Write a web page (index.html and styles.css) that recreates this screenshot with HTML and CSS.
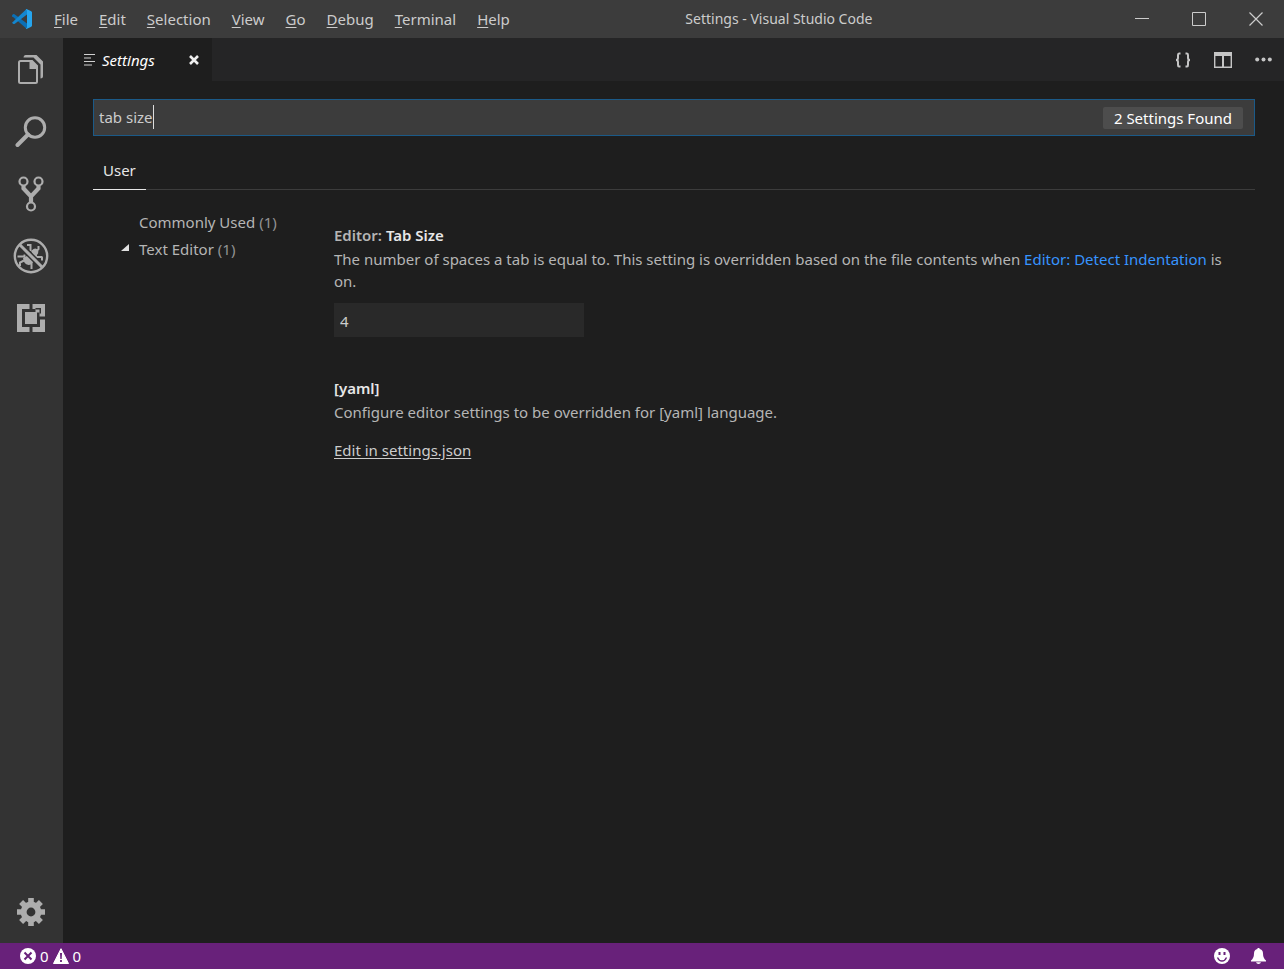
FILE: index.html
```html
<!DOCTYPE html>
<html lang="en">
<head>
<meta charset="utf-8">
<title>Settings - Visual Studio Code</title>
<link rel="stylesheet" href="styles.css">
</head>
<body>
<div class="window">
  <header class="titlebar">
    <svg class="logo" width="20" height="20" viewBox="0 0 20 20" aria-hidden="true">
      <path fill="#0b6fb5" d="M0 6.200 1.300 5.100 2.500 5.200 15 14.600V19.500L14 19.200.2 7.300Z"/>
      <path fill="#1486cf" d="M0 13.700 14 .6 15 .2V5.400L2.500 14.900 1.300 15Z"/>
      <path fill="#26a5ee" d="M14.500 0 19.300 2.200 20 3.200V16.800L19.300 17.800 14.500 20 13.800 19.400 15 18.500V1.500L13.800.6Z"/>
    </svg>
    <nav class="menu" aria-label="Main menu">
      <button type="button"><u>F</u>ile</button>
      <button type="button"><u>E</u>dit</button>
      <button type="button"><u>S</u>election</button>
      <button type="button"><u>V</u>iew</button>
      <button type="button"><u>G</u>o</button>
      <button type="button"><u>D</u>ebug</button>
      <button type="button"><u>T</u>erminal</button>
      <button type="button"><u>H</u>elp</button>
    </nav>
    <div class="title">Settings - Visual Studio Code</div>
    <div class="window-controls">
      <button type="button" aria-label="Minimize"><svg width="14" height="14" viewBox="0 0 14 14"><path d="M0 6.500H14" stroke="#ccc" fill="none"/></svg></button>
      <button type="button" aria-label="Maximize"><svg width="14" height="14" viewBox="0 0 14 14"><path d="M.5.5H13.500V13.500H.5Z" stroke="#ccc" fill="none"/></svg></button>
      <button type="button" aria-label="Close"><svg width="14" height="14" viewBox="0 0 14 14"><path d="M.5.500 13.500 13.500M13.500.5.500 13.500" stroke="#ccc" stroke-width="1.200" fill="none"/></svg></button>
    </div>
  </header>

  <div class="workbench">
    <aside class="activitybar">
      <button type="button" aria-label="Explorer">
        <svg width="26" height="30" viewBox="0 0 26 30"><path fill="none" stroke="#adadad" stroke-width="2" stroke-linejoin="round" d="M12.500 6H2.500Q1 6 1 7.500V26.500Q1 28 2.500 28H17.500Q19 28 19 26.500V12"/><path fill="#adadad" d="M11.500 5H14.500L20 10.500V14H11.500ZM5.500 2.500Q5.500 0 7.500 0H18.500L25 6.500V21.500Q25 23.500 22.500 23.500V9.500L15.500 2.500Z"/></svg>
      </button>
      <button type="button" aria-label="Search">
        <svg width="32" height="32" viewBox="0 0 32 32"><circle cx="20" cy="11.500" r="9.700" fill="none" stroke="#adadad" stroke-width="3"/><path d="M13 18.500 2.500 29" stroke="#adadad" stroke-width="4" stroke-linecap="round"/></svg>
      </button>
      <button type="button" aria-label="Source Control">
        <svg width="26" height="36" viewBox="0 0 26 36"><g fill="none" stroke="#adadad"><g stroke-width="2.200"><circle cx="5.500" cy="5.500" r="4"/><circle cx="20.500" cy="5.500" r="4"/><circle cx="13" cy="30.500" r="4"/></g><path stroke-width="4.200" d="M5.500 9.500V12.500L13 20.500 20.500 12.500V9.500M13 19.500V26.500"/></g></svg>
      </button>
      <button type="button" aria-label="Debug">
        <svg width="36" height="36" viewBox="0 0 36 36"><g fill="none" stroke="#adadad"><path stroke-width="2" d="M14 7H17.500V13M25.500 8V11L22 14.500M29.500 19H24M29 19V22.500M4.500 18.500H12M7 28V24.500L11 22.500M13 25H18.500V31M11.500 18V16.500"/><path fill="#adadad" stroke="none" d="M18 13 20.500 11Q23 9.500 25 12 26 14.500 24 17L24 20 21 19ZM10 20Q12 17.500 15.500 18L20.500 23Q19 27 15.500 27 10.500 26 10 20Z"/><path stroke="#333" stroke-width="6" d="M8 8 28 28"/><path stroke-width="3" d="M6.500 6.500 29.500 29.500"/><circle cx="18" cy="18" r="16.200" stroke-width="2.400"/></g></svg>
      </button>
      <button type="button" aria-label="Extensions">
        <svg width="28" height="28" viewBox="0 0 28 28"><path fill="#adadad" d="M0 0H12.500V5H5V23H12.500V28H0ZM15.500 0H28V12.500H22.500V8.500H18.500V5H15.500ZM15.500 23H23V15.500H28V28H15.500ZM8 8H20V20H8Z"/><path fill="#333" d="M18.500 4H24V9.500H22.500V5.500H18.500Z"/></svg>
      </button>
      <button type="button" class="manage" aria-label="Manage">
        <svg width="28" height="28" viewBox="-14 -14 28 28"><g fill="#adadad"><g id="teeth"><path id="bar" d="M-2.800-14H2.800V-8H-2.800ZM-2.800 8H2.800V14H-2.800Z"/><use href="#bar" transform="rotate(90)"/></g><use href="#teeth" transform="rotate(45)"/></g><circle r="7.400" fill="none" stroke="#adadad" stroke-width="6"/></svg>
      </button>
    </aside>

    <main class="editor">
      <div class="tabbar">
        <div class="tab">
          <svg width="11" height="12" viewBox="0 0 11 12" aria-hidden="true"><path stroke="#d0d0d0" stroke-width="1.200" d="M0 .5H11M0 4H7M0 7.500H11M0 11H8"/></svg>
          <span class="tab-name">Settings</span>
          <button type="button" aria-label="Close tab"><svg width="10" height="10" viewBox="0 0 10 10"><path stroke="#eee" stroke-width="2.600" d="M1 1 9 9M9 1 1 9"/></svg></button>
        </div>
        <div class="editor-actions">
          <button type="button" aria-label="Open settings.json"><svg width="16" height="16" viewBox="0 0 16 16"><path fill="none" stroke="#c5c5c5" stroke-width="2" d="M5.500 1.500H4Q3 1.500 3 3V6Q3 8 1 8 3 8 3 10V13Q3 14.500 4 14.500H5.500M10.500 1.500H12Q13 1.500 13 3V6Q13 8 15 8 13 8 13 10V13Q13 14.500 12 14.500H10.500"/></svg></button>
          <button type="button" aria-label="Split editor"><svg width="18" height="16" viewBox="0 0 18 16"><path fill="#c5c5c5" fill-rule="evenodd" d="M0 0H18V16H0ZM1.400 4V14.600H8V4ZM10 4V14.600H16.600V4Z"/></svg></button>
          <button type="button" aria-label="More actions"><svg width="17" height="5" viewBox="0 0 17 5"><g fill="#c5c5c5"><circle cx="2.200" cy="2.500" r="2"/><circle cx="8.500" cy="2.500" r="2"/><circle cx="14.800" cy="2.500" r="2"/></g></svg></button>
        </div>
      </div>

      <div class="settings">
        <div class="search">
          <input type="text" value="tab size" aria-label="Search settings">
          <span class="caret"></span>
          <span class="count">2 Settings Found</span>
        </div>
        <div class="scopes"><button type="button">User</button></div>
        <div class="settings-body">
          <nav class="toc" aria-label="Settings groups">
            <a href="#common"><span class="twisty"></span>Commonly Used <span class="num">(1)</span></a>
            <a href="#editor"><span class="twisty"><svg width="8" height="8" viewBox="0 0 8 8"><path fill="#e0e0e0" d="M8 0V7H0Z"/></svg></span>Text Editor <span class="num">(1)</span></a>
          </nav>
          <div class="list">
            <section class="setting">
              <h2><label for="tabsize"><span class="category">Editor:</span> Tab Size</label></h2>
              <p>The number of spaces a tab is equal to. This setting is overridden based on the file contents when <a href="#detect">Editor: Detect Indentation</a> is on.</p>
              <input id="tabsize" type="text" value="4">
            </section>
            <section class="setting">
              <h2>[yaml]</h2>
              <p>Configure editor settings to be overridden for [yaml] language.</p>
              <a class="edit-json" href="#json">Edit in settings.json</a>
            </section>
          </div>
        </div>
      </div>
    </main>
  </div>

  <footer class="statusbar">
    <button type="button" class="problems">
      <svg width="16" height="16" viewBox="0 0 16 16" aria-hidden="true"><circle cx="8" cy="8" r="8" fill="#fff"/><path stroke="#68217a" stroke-width="2" d="M4.500 4.500 11.500 11.500M11.500 4.500 4.500 11.500"/></svg>
      <span>0</span>
      <svg width="16" height="16" viewBox="0 0 16 16" aria-hidden="true"><path fill="#fff" stroke="#fff" stroke-linejoin="round" d="M8 .7 15.500 15.500H.5Z"/><path fill="#68217a" d="M7 5H9L8.700 11H7.300ZM7.100 12H8.900V14H7.100Z"/></svg>
      <span>0</span>
    </button>
    <div class="status-right">
      <button type="button" aria-label="Feedback"><svg width="16" height="16" viewBox="0 0 16 16"><circle cx="8" cy="8" r="8" fill="#fff"/><path fill="#68217a" d="M4.500 4H6.500V7H4.500ZM9.500 4H11.500V7H9.500Z"/><path fill="none" stroke="#68217a" stroke-width="1.300" d="M3.500 9.500Q5 13 8 13 11 13 12.500 9.500"/></svg></button>
      <button type="button" aria-label="Notifications"><svg width="15" height="16" viewBox="0 0 15 16"><path fill="#fff" d="M6.500 0H8.500V1Q12 1.500 12 5.500 12 10 15 12.500V13.500H0V12.500Q3 10 3 5.500 3 1.500 6.500 1ZM5 14.300H10Q9.500 16 7.500 16 5.500 16 5 14.300Z"/></svg></button>
    </div>
  </footer>
</div>
</body>
</html>
```

FILE: styles.css
```css
* { box-sizing: border-box; }

body {
  margin: 0;
  background: #1e1e1e;
  color: #b5b5b5;
  font: 15px/22px "Noto Sans", "Open Sans", sans-serif;
}

button {
  display: flex;
  align-items: center;
  justify-content: center;
  margin: 0;
  padding: 0;
  border: 0;
  background: none;
  color: inherit;
  font: inherit;
}

svg { display: block; flex: none; }

.window {
  display: flex;
  flex-direction: column;
  min-height: 100vh;
}

.titlebar {
  display: flex;
  align-items: center;
  height: 38px;
  padding-left: 12px;
  background: #3c3c3c;
  color: #cccccc;
}

.menu {
  display: flex;
  gap: 21px;
  margin-left: 22px;
}

.menu button { display: block; }

.menu u { text-underline-offset: 2px; }

.title {
  flex: 1;
  padding-right: 65px;
  text-align: center;
  font-size: 14px;
  white-space: nowrap;
}

.window-controls { display: flex; }

.window-controls button {
  width: 57px;
  height: 38px;
}

.workbench {
  display: flex;
  flex: 1;
}

.activitybar {
  display: flex;
  flex-direction: column;
  flex: none;
  width: 63px;
  padding: 1px 1px 0 0;
  background: #333333;
}

.activitybar button { height: 62px; }

.activitybar .manage { margin-top: auto; }

.editor {
  flex: 1;
  min-width: 0;
}

.tabbar {
  display: flex;
  justify-content: space-between;
  height: 43px;
  background: #252526;
}

.tab {
  display: flex;
  align-items: center;
  width: 149px;
  padding: 0 13px 0 21px;
  background: #1e1e1e;
  color: #ffffff;
  font-style: italic;
}

.tab-name {
  flex: 1;
  margin-left: 7px;
}

.editor-actions {
  display: flex;
  align-items: center;
  gap: 23px;
  padding-right: 12px;
}

.settings { padding: 18px 29px 0 30px; }

.search {
  display: flex;
  align-items: center;
  position: relative;
  height: 37px;
  padding-right: 11px;
  border: 1px solid #1b5a88;
  background: #3c3c3c;
}

.search input {
  flex: 1;
  min-width: 0;
  height: 100%;
  padding: 0 5px 2px;
  border: 0;
  outline: 0;
  background: none;
  color: #cccccc;
  font: inherit;
}

.caret {
  position: absolute;
  left: 59px;
  top: 5px;
  width: 1px;
  height: 24px;
  background: #dddddd;
}

.count {
  padding: 0 11px;
  border-radius: 2px;
  background: #4d4d4d;
  color: #ffffff;
}

.scopes {
  display: flex;
  height: 54px;
  padding-top: 16px;
  border-bottom: 1px solid #3c3c3c;
}

.scopes button {
  height: 38px;
  padding: 0 10px 2px;
  border-bottom: 1px solid #e7e7e7;
  color: #e7e7e7;
}

.settings-body { display: flex; }

.toc {
  flex: none;
  width: 241px;
  padding: 18px 0 0 28px;
}

.toc a {
  display: flex;
  align-items: center;
  gap: 4px;
  height: 27px;
  color: #b5b5b5;
  text-decoration: none;
}

.twisty {
  width: 14px;
  height: 10px;
}

.num { color: #929292; }

.list {
  flex: 1;
  min-width: 0;
  padding: 34px 14px 0 0;
}

.setting { margin-bottom: 40px; }

.setting h2 {
  margin: 0 0 2px;
  color: #e7e7e7;
  font-size: 15px;
  font-weight: 600;
}

.category { color: #b5b5b5; }

.setting p { margin: 0 0 11px; }

.setting p a {
  color: #3794ff;
  text-decoration: none;
}

.setting input {
  display: block;
  width: 250px;
  height: 34px;
  padding: 2px 6px 0;
  border: 0;
  background: #292929;
  color: #cccccc;
  font: inherit;
}

.edit-json {
  display: inline-block;
  margin-top: 5px;
  color: #cccccc;
  text-underline-offset: 2px;
}

.statusbar {
  display: flex;
  align-items: center;
  justify-content: space-between;
  height: 26px;
  padding: 0 18px 0 20px;
  background: #68217a;
  color: #ffffff;
}

.problems { gap: 4px; }

.status-right {
  display: flex;
  gap: 21px;
}
```
